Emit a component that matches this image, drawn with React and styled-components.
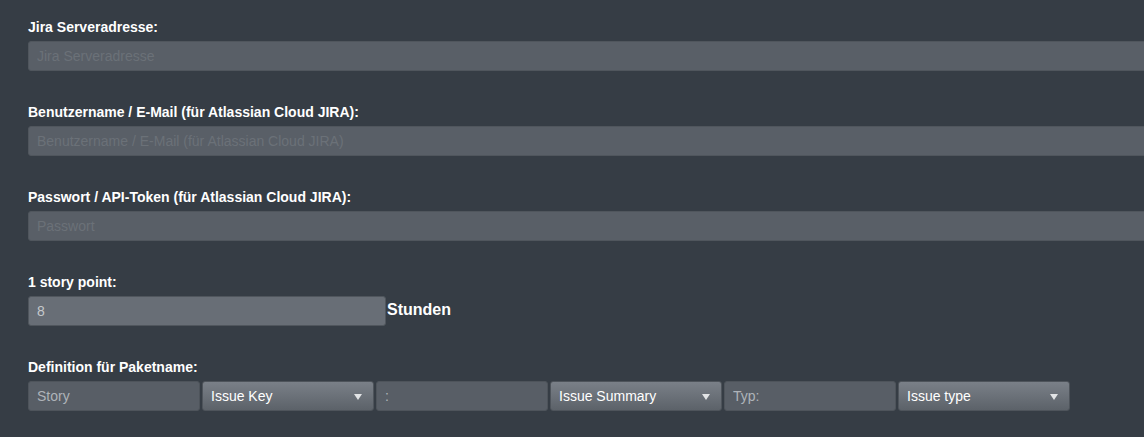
import React from 'react';
import styled, { createGlobalStyle } from 'styled-components';

const GlobalStyle = createGlobalStyle`
  html, body {
    margin: 0;
    padding: 0;
    background: #363d45;
    overflow: hidden;
  }
  body {
    font-family: "Liberation Sans", Arial, sans-serif;
  }
`;

const Page = styled.div`
  padding: 19px 0 0 28px;
  display: flex;
  flex-direction: column;
`;

const Field = styled.div`
  display: flex;
  flex-direction: column;
  gap: 6px;
  margin-bottom: 33px;
`;

const Label = styled.label`
  color: #ffffff;
  font-size: 14px;
  font-weight: bold;
  line-height: 16px;
`;

const TextInput = styled.input`
  box-sizing: border-box;
  height: 30px;
  width: ${p => p.$width || '1140px'};
  padding: 0 8px;
  border: 1px solid #50565d;
  border-radius: 3px;
  background: ${p => (p.$light ? '#686e76' : '#595f67')};
  color: #c4c8cc;
  font-family: "Liberation Sans", Arial, sans-serif;
  font-size: 14px;
  outline: none;
  &::placeholder {
    color: #6b7178;
  }
`;

const InlineRow = styled.div`
  display: flex;
  align-items: center;
  gap: 1px;
`;

const Unit = styled.span`
  color: #ffffff;
  font-size: 16px;
  font-weight: bold;
  margin-top: -3px;
`;

const PartsRow = styled.div`
  display: flex;
  gap: 2px;
`;

const PartInput = styled.input`
  box-sizing: border-box;
  width: 172px;
  height: 30px;
  padding: 0 8px;
  border: 1px solid #4e545b;
  border-radius: 3px;
  background: #585e66;
  color: #aeb3b9;
  font-family: "Liberation Sans", Arial, sans-serif;
  font-size: 14px;
  outline: none;
`;

const Select = styled.div`
  box-sizing: border-box;
  width: 172px;
  height: 30px;
  padding: 0 11px 0 8px;
  border: 1px solid #4e545b;
  border-radius: 3px;
  background: linear-gradient(#7a8088, #5c6269);
  color: #ffffff;
  font-size: 14px;
  display: flex;
  align-items: center;
  justify-content: space-between;
`;

const Caret = styled.span`
  width: 0;
  height: 0;
  border-left: 4px solid transparent;
  border-right: 4px solid transparent;
  border-top: 6px solid #e2e4e6;
  margin-top: 2px;
`;

function Dropdown({ value }) {
  return (
    <Select>
      <span>{value}</span>
      <Caret />
    </Select>
  );
}

export default function App() {
  return (
    <>
      <GlobalStyle />
      <Page>
        <Field>
          <Label>Jira Serveradresse:</Label>
          <TextInput placeholder="Jira Serveradresse" />
        </Field>
        <Field>
          <Label>Benutzername / E-Mail (für Atlassian Cloud JIRA):</Label>
          <TextInput placeholder="Benutzername / E-Mail (für Atlassian Cloud JIRA)" />
        </Field>
        <Field>
          <Label>Passwort / API-Token (für Atlassian Cloud JIRA):</Label>
          <TextInput type="password" placeholder="Passwort" />
        </Field>
        <Field>
          <Label>1 story point:</Label>
          <InlineRow>
            <TextInput $light $width="358px" defaultValue="8" />
            <Unit>Stunden</Unit>
          </InlineRow>
        </Field>
        <Field>
          <Label>Definition für Paketname:</Label>
          <PartsRow>
            <PartInput defaultValue="Story" />
            <Dropdown value="Issue Key" />
            <PartInput defaultValue=":" />
            <Dropdown value="Issue Summary" />
            <PartInput defaultValue="Typ:" />
            <Dropdown value="Issue type" />
          </PartsRow>
        </Field>
      </Page>
    </>
  );
}
